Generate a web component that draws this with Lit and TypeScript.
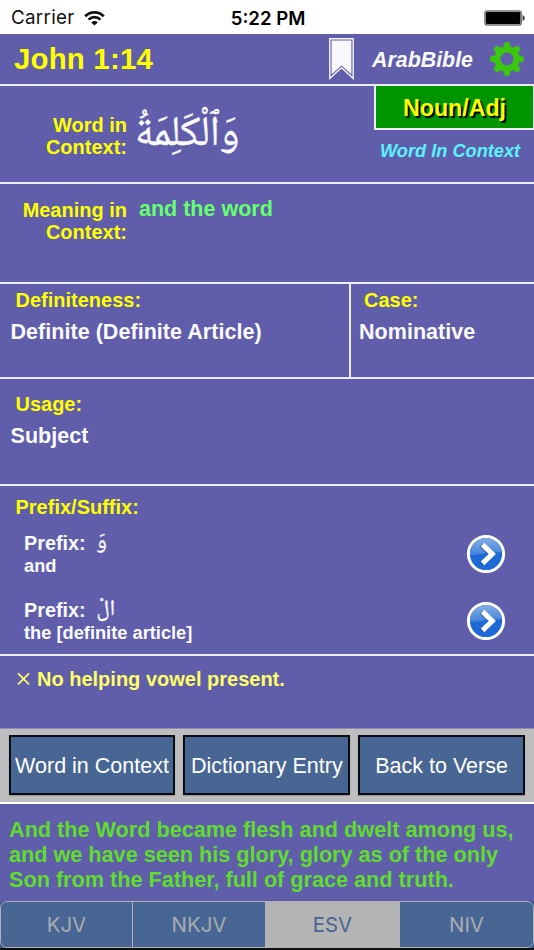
import { LitElement, html, css, svg } from "lit";
import { customElement, property, state } from "lit/decorators.js";
import { classMap } from "lit/directives/class-map.js";

@customElement("status-bar")
class StatusBar extends LitElement {
  static styles = css`
    :host { display: grid; grid-template-columns: 1fr auto 1fr; align-items: center; height: 34px; box-sizing: border-box;
      padding: 1px 9px 0 11px; background: #fff; color: #111; font-family: Inter, Roboto, sans-serif; font-weight: 400; }
    .left { display: flex; align-items: center; gap: 9px; }
    .carrier { font-size: 18.8px; letter-spacing: 0.3px; }
    .time { font-size: 18.6px; font-weight: 600; color: #000; }
    .battery { justify-self: end; display: block; }
  `;
  render() {
    return html`
      <div class="left">
        <span class="carrier">Carrier</span>
        <svg width="21" height="16" viewBox="0 0 21 16" fill="none" stroke="#111" stroke-width="2.7">
          <path d="M1.2 6.2a13.2 13.2 0 0 1 18.6 0M4.6 9.6a8.4 8.4 0 0 1 11.8 0" />
          <path d="M10.5 15.6 7.3 12.4a4.6 4.6 0 0 1 6.4 0Z" fill="#111" stroke="none" />
        </svg>
      </div>
      <span class="time">5:22 PM</span>
      <svg class="battery" width="41" height="16" viewBox="0 0 41 16">
        <rect x=".9" y=".9" width="36.4" height="14.2" rx="2.6" fill="#ddd" stroke="#777" stroke-width="1.5" />
        <rect x="1.9" y="1.9" width="34.4" height="12.2" rx="1.4" />
        <path d="M38.6 5q2.2 1 2.2 3t-2.2 3Z" fill="#333" />
      </svg>`;
  }
}

@customElement("prefix-row")
class PrefixRow extends LitElement {
  @property() arabic = "";
  @property() gloss = "";
  static styles = css`
    :host { display: flex; align-items: center; justify-content: space-between; height: 44px; }
    .head { display: flex; font-size: 19.8px; line-height: 22.5px; height: 22.5px; }
    .ar { font-family: "Noto Naskh Arabic", Amiri, "DejaVu Sans", sans-serif; font-weight: 400; font-size: 22px; margin: 0 0 0 11px; -webkit-text-stroke: 0.4px #fafaff; }
    .gloss { font-size: 18.25px; line-height: 21px; margin-top: 0.5px; }
    svg { display: block; }
  `;
  render() {
    return html`
      <div>
        <div class="head"><span>Prefix:</span><span class="ar" lang="ar" dir="rtl">${this.arabic}</span></div>
        <div class="gloss">${this.gloss}</div>
      </div>
      <svg width="40" height="40" viewBox="0 0 40 40">
        <defs>
          <linearGradient id="gloss" x1="0" y1="0" x2="0" y2="1">
            <stop offset="0" stop-color="#86ade6" />
            <stop offset="1" stop-color="#3f80dc" />
          </linearGradient>
        </defs>
        <circle cx="20" cy="20" r="17.6" fill="#1d69d6" stroke="#fff" stroke-width="3" />
        <path d="M4 21.5a16 16 0 0 1 31.8-3.5Q22 18.5 4 21.5Z" fill="url(#gloss)" />
        <path d="m16.3 10.6 9.7 9.4-9.7 9.4" fill="none" stroke="#0d4bb0" stroke-width="4.6" opacity=".6" transform="translate(-1 .6)" />
        <path d="m16.5 10.6 9.8 9.4-9.8 9.4" fill="none" stroke="#fff" stroke-width="5" />
      </svg>`;
  }
}

@customElement("app-root")
class AppRoot extends LitElement {
  @state() private version = "ESV";

  static styles = css`
    :host { display: flex; flex-direction: column; width: 534px; height: 950px; overflow: hidden; box-sizing: border-box;
      background: #605eab; color: #fafaff; font-family: "Liberation Sans", Arial, sans-serif; font-weight: 700;
      border-bottom: 2px solid #111; }
    section, header { flex: none; box-sizing: border-box; border-bottom: 2px solid #ececfa; }
    header { display: flex; align-items: center; height: 52px; padding: 0 10px 0 14px; }
    .ref { flex: 1; color: #ff0; font-size: 29.4px; letter-spacing: 0.2px; line-height: 34px; }
    .brand { font-style: italic; font-size: 21.4px; line-height: 24px; margin: 1px 17px 0 18px; }
    .label { color: #ff0; font-size: 19.9px; letter-spacing: 0.05px; line-height: 22.5px; }
    .value { font-size: 21.5px; letter-spacing: 0.04px; line-height: 24px; margin: 8.7px 0 0 -5px; white-space: nowrap; }
    .side { width: 127px; text-align: right; }
    .word { height: 98px; display: flex; }
    .word .side { padding-top: 27.6px; }
    .ar { flex: 1; margin: 20px 0 0 8px; font-family: "Noto Naskh Arabic", Amiri, "DejaVu Sans", sans-serif; font-weight: 400;
      font-size: 42px; line-height: 60px; white-space: nowrap; -webkit-text-stroke: 0.4px #fafaff; }
    .kind { width: 160px; }
    .tag { height: 44px; box-sizing: border-box; border: 2px solid #ececfa; border-top: 0; border-right-width: 1px; background: #009500; color: #ff0;
      font-size: 23.2px; line-height: 45px; text-align: center; text-shadow: 2px 2px 1px #000; }
    .sub { color: #58f4ff; font-style: italic; font-size: 18.2px; line-height: 21px; margin: 10.5px 0 0 6px; }
    .meaning { height: 100px; display: flex; padding-top: 14.6px; }
    .green { color: #66ff70; font-size: 21.5px; line-height: 24px; margin: -2px 0 0 12px; }
    .grammar { height: 95px; display: grid; grid-template-columns: 349px 1fr; }
    .cell { padding: 4.9px 0 0 15.5px; }
    .cell + .cell { border-left: 2px solid #ececfa; padding-left: 13px; }
    .usage { height: 107px; padding: 13.6px 0 0 15.5px; }
    .affix { height: 170px; padding: 9.9px 28px 0 15.5px; }
    .rows { display: flex; flex-direction: column; gap: 23px; margin: 13.3px 0 0 8.5px; }
    .vowel { height: 72px; border: 0; padding: 11px 0 0 15px; color: #ffff66; font-size: 20px; line-height: 24px; display: flex; gap: 5px; }
    .cross { width: 17px; height: 24px; }
    nav { flex: none; box-sizing: border-box; height: 76px; background: #bebebe; border-top: 1px solid #8e8ca8; border-bottom: 2px solid #fff;
      display: flex; gap: 8px; padding: 6px 9px 7px 8.6px; }
    button { font: inherit; color: inherit; margin: 0; cursor: pointer; }
    .action { flex: 1; padding: 2px 0 0; border: 2px solid #080c12; background: #486694; color: #fff; font-weight: 400; font-size: 21.5px; height: 60px;
      white-space: nowrap; box-shadow: 0 1px 1px #999; }
    .verse { flex: 1; color: #5fdc2e; font-size: 21.65px; line-height: 25px; padding: 12.7px 0 0 9px; white-space: nowrap; }
    .tabs { flex: none; display: grid; grid-template-columns: 132px 133px 134px 1fr; height: 47px; box-sizing: border-box; border: 1.5px solid #b2b2b2;
      border-radius: 7px; overflow: hidden; background: #486694; }
    .foot { flex: none; background: #3f5d8d; }
    .tab { border: 0; border-right: 1px solid #b2b2b2; background: #486694; color: #a9acb1; padding: 0; font: 400 20.4px Inter, Roboto, sans-serif; }
    .tab:last-child { border-right: 0; }
    .tab.on { background: #b4b4b4; color: #486694; }
  `;

  private gear() {
    const teeth = [0, 45, 90, 135, 180, 225, 270, 315];
    return svg`<svg width="34" height="34" viewBox="-17 -17 34 34">
      <circle r="9.6" fill="none" stroke="#3bc60f" stroke-width="6.2" />
      ${teeth.map((a) => svg`<path d="M-3.8-11.5-2.7-15.8q.3-1.1 1.3-1.1h2.8q1 0 1.3 1.1L3.8-11.5Z" fill="#3bc60f" transform="rotate(${a})" />`)}
    </svg>`;
  }

  render() {
    return html`
      <status-bar></status-bar>
      <header>
        <div class="ref">John 1:14</div>
        <svg width="25" height="42" viewBox="0 0 25 42">
          <path d="M.8.8h23.4v39.6L12.5 29.8.8 40.4Z" fill="#605eab" stroke="#f8f8ff" stroke-width="1.4" />
          <path d="M2.6 2.6h19.8v33.6L12.5 27.4 2.6 36.2Z" fill="#f8f8fa" />
        </svg>
        <div class="brand">ArabBible</div>
        ${this.gear()}
      </header>
      <section class="word">
        <div class="label side">Word in<br />Context:</div>
        <div class="ar"><span lang="ar" dir="rtl">وَٱلْكَلِمَةُ</span></div>
        <div class="kind">
          <div class="tag">Noun/Adj</div>
          <div class="sub">Word In Context</div>
        </div>
      </section>
      <section class="meaning">
        <div class="label side">Meaning in<br />Context:</div>
        <div class="green">and the word</div>
      </section>
      <section class="grammar">
        <div class="cell"><div class="label">Definiteness:</div><div class="value">Definite (Definite Article)</div></div>
        <div class="cell"><div class="label">Case:</div><div class="value">Nominative</div></div>
      </section>
      <section class="usage">
        <div class="label">Usage:</div>
        <div class="value">Subject</div>
      </section>
      <section class="affix">
        <div class="label">Prefix/Suffix:</div>
        <div class="rows">
          <prefix-row arabic="وَ" gloss="and"></prefix-row>
          <prefix-row arabic="الْ" gloss="the [definite article]"></prefix-row>
        </div>
      </section>
      <section class="vowel">
        <svg class="cross" viewBox="0 0 17 24" fill="none" stroke="#ffff66" stroke-width="1.7"><path d="m3 6.3 11 11M14 6.3l-11 11" /></svg>
        <span>No helping vowel present.</span>
      </section>
      <nav>
        ${["Word in Context", "Dictionary Entry", "Back to Verse"].map((t) => html`<button class="action">${t}</button>`)}
      </nav>
      <div class="verse">
        And the Word became flesh and dwelt among us,<br />and we have seen his glory, glory as of the only<br />Son from the Father, full of grace and truth.
      </div>
      <div class="foot">
        <div class="tabs">
          ${["KJV", "NKJV", "ESV", "NIV"].map(
            (v) => html`<button class=${classMap({ tab: true, on: v === this.version })} @click=${() => (this.version = v)}>${v}</button>`
          )}
        </div>
      </div>`;
  }
}
